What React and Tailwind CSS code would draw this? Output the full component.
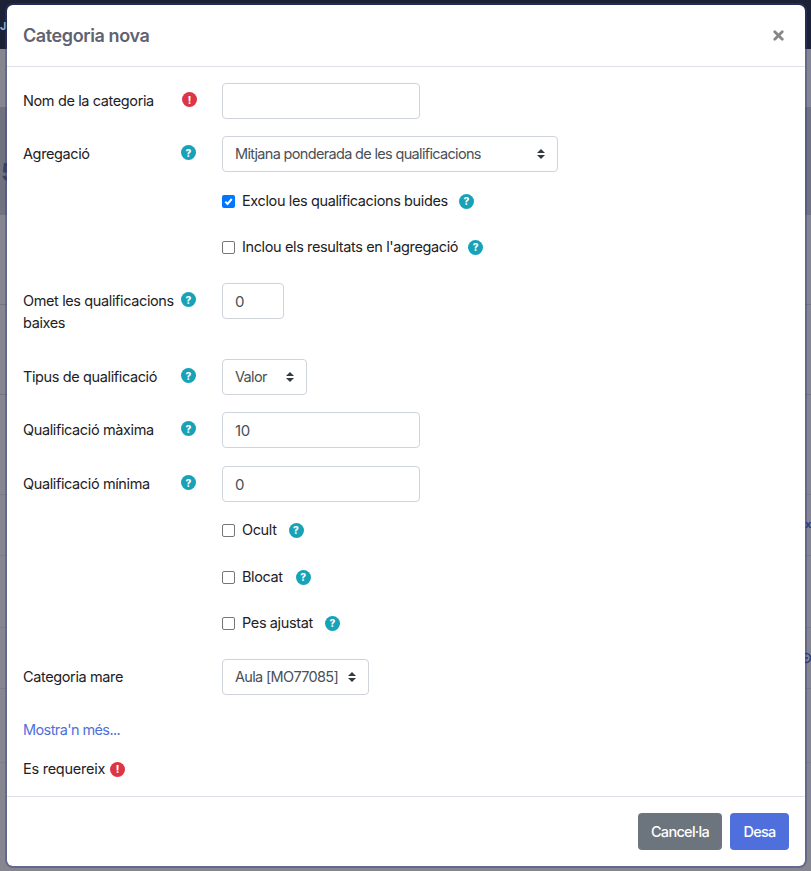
import { X } from 'lucide-react'

function Badge({ type = 'help', className = '' }) {
  const bg = type === 'help' ? 'bg-[#17a2b8]' : 'bg-[#dc3545]'
  return (
    <span
      className={`inline-flex h-[15px] w-[15px] shrink-0 items-center justify-center rounded-full text-[10px] font-extrabold leading-none tracking-normal text-white ${bg} ${className}`}
    >
      {type === 'help' ? '?' : '!'}
    </span>
  )
}

function UpDown() {
  return (
    <svg width="10" height="12" viewBox="0 0 10 12" className="shrink-0 text-[#343a40]">
      <path d="M5 1 9 5H1z M5 11 1 7h8z" fill="currentColor" />
    </svg>
  )
}

function Row({ label, badge = 'help', children, className = '' }) {
  return (
    <div className={`flex items-start ${className}`}>
      <div className="flex w-[199px] shrink-0 items-start pt-[7px]">
        <span className="w-[158px] leading-[22px]">{label}</span>
        <Badge type={badge} className={badge === 'error' ? 'ml-px mt-[2px]' : 'mt-[2px]'} />
      </div>
      {children}
    </div>
  )
}

function Select({ value, className = '' }) {
  return (
    <div
      className={`flex h-9 items-center justify-between whitespace-nowrap rounded-[4px] border border-[#ced4da] pl-3 pr-[11px] tracking-[-0.67px] text-[#495057] ${className}`}
    >
      <span>{value}</span>
      <UpDown />
    </div>
  )
}

function Input({ value = '', className = '' }) {
  return (
    <div
      className={`flex h-9 items-center rounded-[4px] border border-[#ced4da] px-3 pt-[3px] text-[15px] text-[#495057] ${className}`}
    >
      {value}
    </div>
  )
}

function Check({ label, checked = false, gap = 'ml-[10px]', className = '' }) {
  return (
    <div className={`ml-[199px] flex h-[22px] items-center ${className}`}>
      {checked ? (
        <span className="flex h-[13px] w-[13px] items-center justify-center rounded-[2px] bg-[#0075ff]">
          <svg width="11" height="11" viewBox="0 0 11 11">
            <path d="M2.3 5.6 4.5 7.9 8.8 3" fill="none" stroke="white" strokeWidth="2" />
          </svg>
        </span>
      ) : (
        <span className="h-[13px] w-[13px] rounded-[2px] border border-[#767676] bg-white" />
      )}
      <span className="ml-[7px]">{label}</span>
      <Badge className={gap} />
    </div>
  )
}

// what shows of the page behind the dialog, top to bottom
const bands = [
  'h-[49px] bg-[#1c2136]',
  'h-[58px] bg-[#85868f]',
  'h-[108px] bg-[#71727f]',
  'h-[90px] border-b border-[#74757f] bg-[#85868f]',
  'h-[90px] border-b border-[#74757f] bg-[#85868f]',
  'h-[100px] border-b border-[#7a7b85] bg-[#85868f]',
  'h-[61px] border-b border-[#7a7b85] bg-[#85868f]',
  'h-[72px] border-b border-[#7a7b85] bg-[#85868f]',
  'h-[61px] border-b border-[#7a7b85] bg-[#85868f]',
  'h-[74px] border-b border-[#7d7e88] bg-[#85868f]',
  'h-[108px] bg-[#85868f]',
]

export default function App() {
  return (
    <div className="relative h-[871px] w-[811px] overflow-hidden bg-[#85868f] font-['Inter','Liberation_Sans',sans-serif] text-[14.5px] tracking-[-0.38px] text-[#1d2125]">
      <div>
        {bands.map((band, i) => (
          <div key={i} className={band} />
        ))}
      </div>
      <span className="absolute left-0 top-[18px] text-[11px] font-bold text-[#8fb7cf]">J</span>
      <span className="absolute left-[1px] top-[155px] text-[24px] font-bold text-[#3b4264]">5</span>
      <span className="absolute left-[805px] top-[517px] text-[11px] font-bold leading-[14px] tracking-normal text-[#24408c]">x</span>
      <svg width="6" height="12" viewBox="0 0 6 12" className="absolute left-[805px] top-[652px] text-[#24408c]">
        <circle cx="1" cy="6" r="4.5" fill="none" stroke="currentColor" strokeWidth="1.6" />
        <path d="M-1 6h4" stroke="currentColor" strokeWidth="1.6" />
      </svg>

      <div className="absolute left-[7px] top-[5px] flex h-[861px] w-[798px] flex-col rounded-[6px] bg-white shadow-[0_0_0_2px_rgba(50,60,130,0.4)]">
        <header className="flex h-[62px] shrink-0 items-center justify-between border-b border-[#dee2e6] pl-4 pr-[19px]">
          <h1 className="text-[18px] font-semibold tracking-[-0.4px] text-[#5f6270]">Categoria nova</h1>
          <X className="h-[15px] w-[15px] text-[#868686]" strokeWidth={4.5} />
        </header>

        <div className="flex-1 pl-4 pt-4">
          <Row label="Nom de la categoria" badge="error">
            <Input className="w-[198px]" />
          </Row>
          <Row label="Agregació" className="mt-[17px]">
            <Select value="Mitjana ponderada de les qualificacions" className="w-[336px]" />
          </Row>
          <Check checked label="Exclou les qualificacions buides" gap="ml-[11px]" className="mt-[18px]" />
          <Check label="Inclou els resultats en l'agregació" className="mt-[24px]" />
          <Row label="Omet les qualificacions baixes" className="mt-[25px] h-[60px]">
            <Input value="0" className="w-[62px]" />
          </Row>
          <Row label="Tipus de qualificació" className="mt-[16px]">
            <Select value="Valor" className="w-[85px]" />
          </Row>
          <Row label="Qualificació màxima" className="mt-[17px]">
            <Input value="10" className="w-[198px]" />
          </Row>
          <Row label="Qualificació mínima" className="mt-[18px]">
            <Input value="0" className="w-[198px]" />
          </Row>
          <Check label="Ocult" gap="ml-[12px]" className="mt-[17px]" />
          <Check label="Blocat" gap="ml-[13px]" className="mt-[25px]" />
          <Check label="Pes ajustat" gap="ml-[12px]" className="mt-[24px]" />
          <div className="mt-[25px] flex items-center">
            <span className="w-[199px]">Categoria mare</span>
            <Select value="Aula [MO77085]" className="w-[147px]" />
          </div>
          <a className="mt-[24px] block leading-[22px] tracking-[-0.6px] text-[#4f6fdc]">Mostra'n més...</a>
          <div className="mt-[17px] flex items-center leading-[22px] tracking-[-0.25px]">
            Es requereix
            <Badge type="error" className="ml-[5px]" />
          </div>
        </div>

        <footer className="flex h-[70px] shrink-0 items-center justify-end gap-2 border-t border-[#dee2e6] pr-4">
          <button className="h-[37px] w-[84px] rounded-[4px] bg-[#6c757d] font-medium tracking-[-0.7px] text-white">Cancel·la</button>
          <button className="h-[37px] w-[59px] rounded-[4px] bg-[#4f6fdc] font-medium tracking-[-0.7px] text-white">Desa</button>
        </footer>
      </div>
    </div>
  )
}
